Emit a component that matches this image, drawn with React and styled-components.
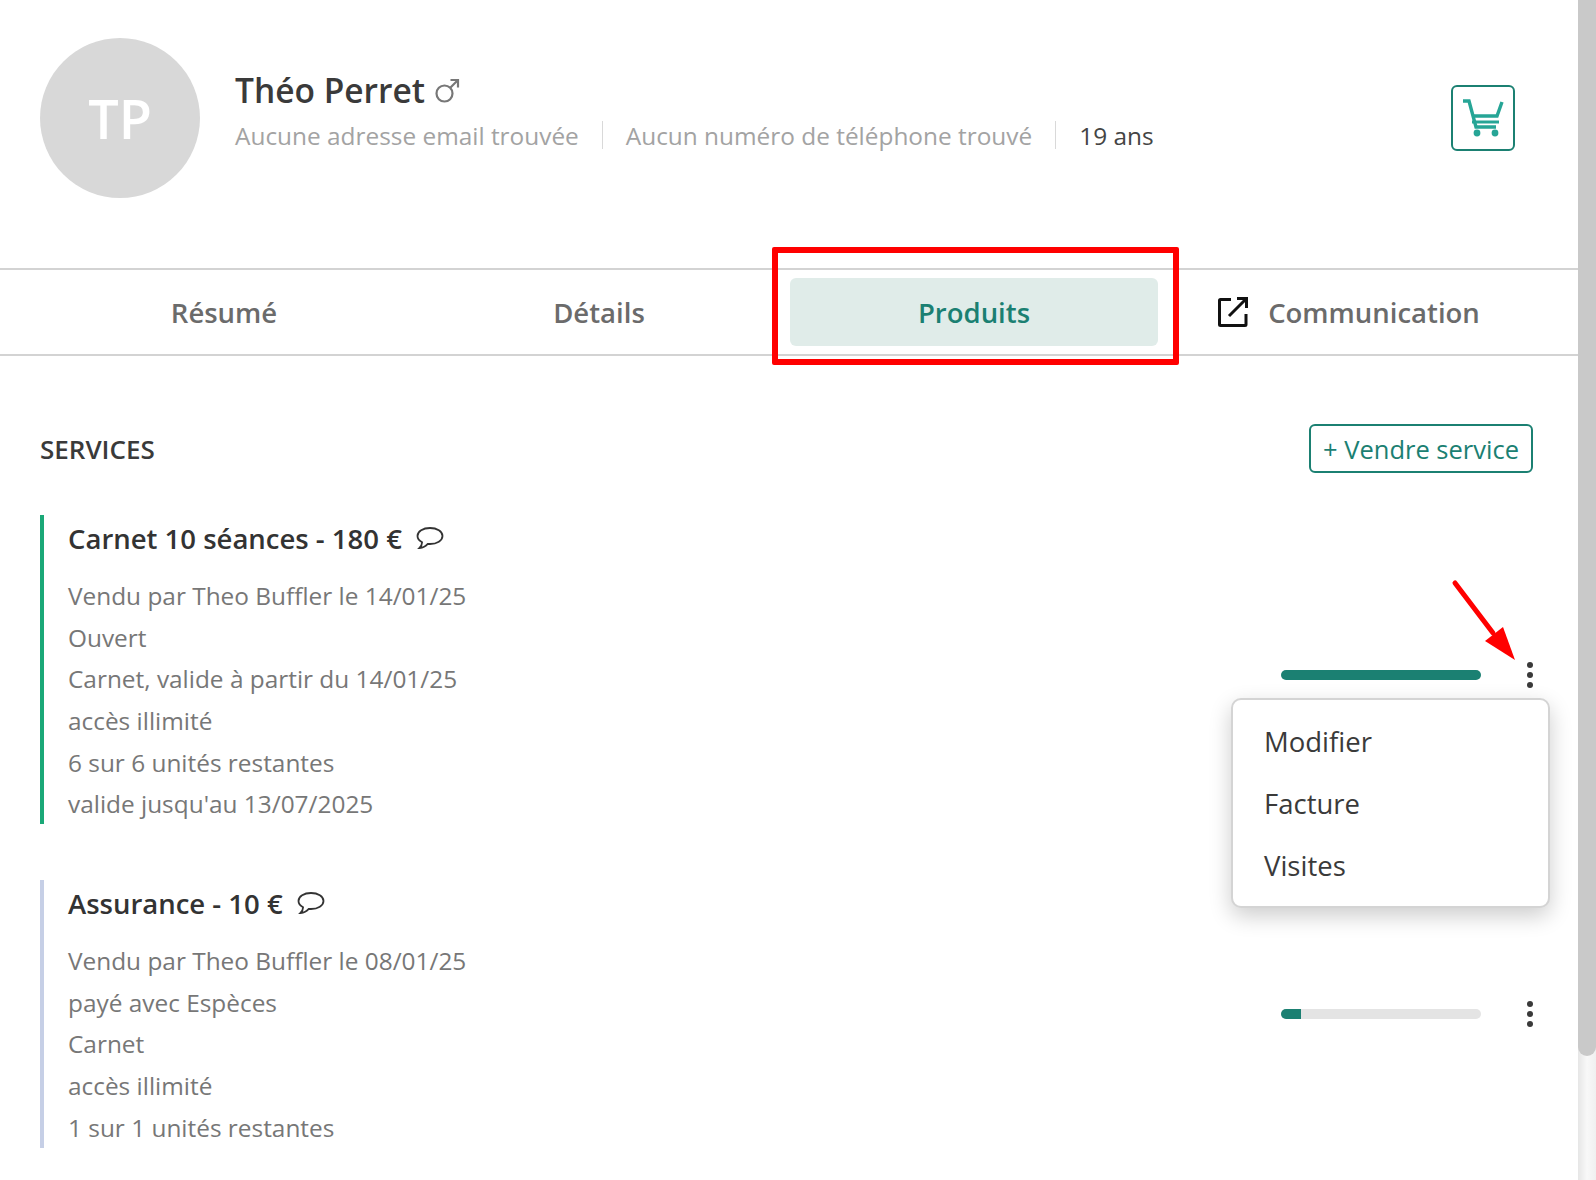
import React from "react";
import styled, { createGlobalStyle } from "styled-components";

const GlobalStyle = createGlobalStyle`
    html, body {
        margin: 0;
        padding: 0;
        background: #fff;
        font-family: "Open Sans", "Liberation Sans", sans-serif;
        overflow: hidden;
    }
    * { box-sizing: border-box; }
`

const Page = styled.div`
    position: relative;
    display: flex;
    width: 1596px;
    height: 1180px;
    overflow: hidden;
`

const Content = styled.main`
    width: 1578px;
    flex: none;
`

const ScrollTrack = styled.div`
    width: 18px;
    flex: none;
    background: linear-gradient(to right, #e6e6e6, #f8f8f8 50%, #f0f0f0);
`

const ScrollThumb = styled.div`
    height: 1056px;
    background: #c9c9c9;
    border-radius: 0 0 9px 9px;
`

const Header = styled.header`
    display: flex;
    align-items: flex-start;
    height: 268px;
    padding: 38px 63px 0 40px;
`

const Avatar = styled.div`
    width: 160px;
    height: 160px;
    flex: none;
    display: flex;
    align-items: center;
    justify-content: center;
    border-radius: 50%;
    background: #d8d8d8;
    color: #fff;
    font-size: 54px;
    font-weight: 600;
`

const Identity = styled.div`
    flex: 1;
    margin-left: 35px;
    padding-top: 29px;
`

const Name = styled.h1`
    display: flex;
    align-items: center;
    gap: 10px;
    margin: 0;
    height: 46px;
    color: #3a3a3a;
    font-size: 33.5px;
    font-weight: 600;
`

const Contact = styled.div`
    display: flex;
    align-items: center;
    margin-top: 5px;
    height: 34px;
    font-size: 24.4px;
    color: ${props => props.$dark ? "#444" : "#a3a3a3"};
`

const ContactItem = styled.span`
    color: ${props => props.$dark ? "#444" : "#a3a3a3"};
`

const Separator = styled.span`
    width: 1px;
    height: 28px;
    margin: 0 23px;
    background: #d9d9d9;
`

const CartButton = styled.button`
    width: 64px;
    height: 66px;
    flex: none;
    margin-top: 47px;
    padding: 0;
    display: flex;
    align-items: center;
    justify-content: center;
    background: #fff;
    border: 2px solid #1b8072;
    border-radius: 6px;
`

const Tabs = styled.nav`
    display: grid;
    grid-template-columns: repeat(4, 368px);
    gap: 7px;
    height: 88px;
    padding: 8px 0 8px 40px;
    border-top: 2px solid #d3d3d3;
    border-bottom: 2px solid #d3d3d3;
`

const Tab = styled.div`
    display: flex;
    align-items: center;
    justify-content: center;
    gap: 20px;
    border-radius: 6px;
    font-size: 27.5px;
    font-weight: 600;
    color: ${props => props.$active ? "#1b8072" : "#6b6b6b"};
    background: ${props => props.$active ? "#e0ece9" : "transparent"};
`

const Highlight = styled.div`
    position: absolute;
    left: 772px;
    top: 247px;
    width: 407px;
    height: 118px;
    border: 6px solid #ff0000;
    border-radius: 2px;
`

const Section = styled.section`
    padding: 68px 45px 0 40px;
`

const SectionHead = styled.div`
    display: flex;
    align-items: center;
    justify-content: space-between;
    height: 49px;
    margin-bottom: 42px;
`

const SectionTitle = styled.h2`
    margin: 0;
    color: #3a3a3a;
    font-size: 26px;
    font-weight: 600;
`

const SellButton = styled.button`
    height: 49px;
    width: 224px;
    padding: 0;
    background: #fff;
    border: 2px solid #1b8072;
    border-radius: 6px;
    color: #1b8072;
    font-family: inherit;
    font-size: 25.5px;
`

const Service = styled.article`
    position: relative;
    display: flex;
    justify-content: space-between;
    align-items: center;
    height: ${props => props.$height}px;
    margin-bottom: 56px;
    padding-left: 24px;
    border-left: 4px solid ${props => props.$accent};
`

const ServiceText = styled.div`
    align-self: flex-start;
`

const ServiceTitle = styled.h3`
    display: flex;
    align-items: center;
    gap: 14px;
    height: 46px;
    margin: 0 0 14px;
    color: #333;
    font-size: 27.5px;
    font-weight: 600;
`

const ServiceLine = styled.div`
    height: 41.7px;
    line-height: 41.7px;
    color: #777;
    font-size: 24.4px;
`

const ServiceActions = styled.div`
    display: flex;
    align-items: center;
    gap: 46px;
    margin-top: ${props => props.$offset}px;
`

const Progress = styled.div`
    width: 200px;
    height: 10px;
    border-radius: 5px;
    overflow: hidden;
    background: #e4e4e4;
`

const ProgressFill = styled.div`
    height: 100%;
    background: #1b8072;
`

const Dots = styled.div`
    display: flex;
    flex-direction: column;
    gap: 4px;
    width: 6px;

    & span {
        width: 6px;
        height: 6px;
        border-radius: 50%;
        background: #3a3a3a;
    }
`

const Menu = styled.div`
    position: absolute;
    left: 1231px;
    top: 698px;
    width: 319px;
    height: 210px;
    padding: 11px 0 0 31px;
    background: #fff;
    border: 2px solid #d4d4d4;
    border-radius: 10px;
    box-shadow: 0 8px 22px rgba(0, 0, 0, 0.2);
`

const MenuItem = styled.div`
    height: 62px;
    line-height: 62px;
    color: #3a3a3a;
    font-size: 27.5px;
`

const Arrow = styled.svg`
    position: absolute;
    left: 1450px;
    top: 578px;
`

const CartIcon = () => (
    <svg width="42" height="38" viewBox="0 0 42 38" fill="none" stroke="#26a596" strokeWidth="3.4">
        <path d="M1 2h6l7 26h20" />
        <path d="M10 17h25l5-14" />
        <path d="M10 23h27" strokeWidth="3" />
        <circle cx="15" cy="34" r="3.4" fill="#26a596" stroke="none" />
        <circle cx="33" cy="34" r="3.4" fill="#26a596" stroke="none" />
    </svg>
)

const MaleIcon = () => (
    <svg width="25" height="25" viewBox="0 0 25 25" fill="none" stroke="#777" strokeWidth="2.2">
        <circle cx="9.5" cy="15.5" r="8" />
        <path d="M15.5 9.5L23 2M15.5 2H23V9.5" />
    </svg>
)

const OpenIcon = () => (
    <svg width="30" height="30" viewBox="0 0 30 30" fill="none" stroke="#111" strokeWidth="3">
        <path d="M13 2.5H2.5a1 1 0 0 0-1 1V27.5a1 1 0 0 0 1 1H27a1 1 0 0 0 1-1V17" />
        <path d="M19 1.5H28.5V11M28 2L11 19" />
    </svg>
)

const BubbleIcon = () => (
    <svg width="28" height="24" viewBox="0 0 28 24" fill="none" stroke="#333" strokeWidth="1.8">
        <path d="M14 2C7 2 1.5 5.5 1.5 10c0 2.6 1.8 4.8 4.6 6.2C6 18.500 5 20.500 3.500 22c3.500-.3 6.500-2 8.300-4.100.7.1 1.500.1 2.200.1 7 0 12.500-3.500 12.500-8S21 2 14 2z" />
    </svg>
)

const services = [
    {
        title: "Carnet 10 séances - 180 €",
        accent: "#1aa877",
        height: 309,
        progress: 100,
        offset: 10,
        lines: [
            "Vendu par Theo Buffler le 14/01/25",
            "Ouvert",
            "Carnet, valide à partir du 14/01/25",
            "accès illimité",
            "6 sur 6 unités restantes",
            "valide jusqu'au 13/07/2025",
        ],
    },
    {
        title: "Assurance - 10 €",
        accent: "#c6cfe6",
        height: 268,
        progress: 10,
        offset: 0,
        lines: [
            "Vendu par Theo Buffler le 08/01/25",
            "payé avec Espèces",
            "Carnet",
            "accès illimité",
            "1 sur 1 unités restantes",
        ],
    },
]

export default function App() {
    return (
        <Page>
            <GlobalStyle />
            <Content>
                <Header>
                    <Avatar>TP</Avatar>
                    <Identity>
                        <Name>Théo Perret <MaleIcon /></Name>
                        <Contact>
                            <ContactItem>Aucune adresse email trouvée</ContactItem>
                            <Separator />
                            <ContactItem>Aucun numéro de téléphone trouvé</ContactItem>
                            <Separator />
                            <ContactItem $dark>19 ans</ContactItem>
                        </Contact>
                    </Identity>
                    <CartButton><CartIcon /></CartButton>
                </Header>
                <Tabs>
                    <Tab>Résumé</Tab>
                    <Tab>Détails</Tab>
                    <Tab $active>Produits</Tab>
                    <Tab><OpenIcon />Communication</Tab>
                </Tabs>
                <Section>
                    <SectionHead>
                        <SectionTitle>SERVICES</SectionTitle>
                        <SellButton>+ Vendre service</SellButton>
                    </SectionHead>
                    {services.map(service => (
                        <Service key={service.title} $accent={service.accent} $height={service.height}>
                            <ServiceText>
                                <ServiceTitle>{service.title} <BubbleIcon /></ServiceTitle>
                                {service.lines.map(line => <ServiceLine key={line}>{line}</ServiceLine>)}
                            </ServiceText>
                            <ServiceActions $offset={service.offset}>
                                <Progress>
                                    <ProgressFill style={{ width: `${service.progress}%` }} />
                                </Progress>
                                <Dots><span /><span /><span /></Dots>
                            </ServiceActions>
                        </Service>
                    ))}
                </Section>
            </Content>
            <ScrollTrack><ScrollThumb /></ScrollTrack>
            <Highlight />
            <Menu>
                <MenuItem>Modifier</MenuItem>
                <MenuItem>Facture</MenuItem>
                <MenuItem>Visites</MenuItem>
            </Menu>
            <Arrow width="70" height="86" viewBox="0 0 70 86">
                <path d="M5 5L43 55" stroke="#ff0000" strokeWidth="5" strokeLinecap="round" />
                <path d="M65 82L35 63L53 49Z" fill="#ff0000" />
            </Arrow>
        </Page>
    )
}
